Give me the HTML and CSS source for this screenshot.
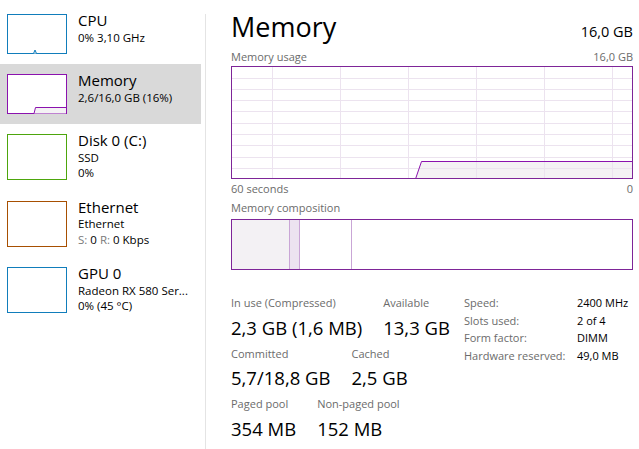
FILE: index.html
```html
<!DOCTYPE html>
<html lang="en">
<head>
<meta charset="utf-8">
<title>Task Manager - Memory</title>
<link rel="stylesheet" href="styles.css">
</head>
<body>
<div class="app">
  <nav class="sidebar">
    <div class="item">
      <svg class="thumb" width="60" height="40" viewBox="0 0 60 40">
        <rect x="0.5" y="0.5" width="59" height="39" fill="#fff" stroke="#117dbb"/>
        <path d="M26.5 39.5 L28 36 L29.5 39.5" fill="#dbeaf5" stroke="#117dbb"/>
      </svg>
      <div class="info">
        <div class="name">CPU</div>
        <div class="sub">0% 3,10 GHz</div>
      </div>
    </div>
    <div class="item selected">
      <svg class="thumb" width="60" height="40" viewBox="0 0 60 40">
        <rect x="0.5" y="0.5" width="59" height="39" fill="#fff" stroke="#8b12ae"/>
        <path d="M27 39.5 L28.5 33.5 L59 33.5 L59 39.5 Z" fill="#f4f2f4"/>
        <path d="M27 39.5 L28.5 33.5 L59 33.5" fill="none" stroke="#8b12ae"/>
      </svg>
      <div class="info">
        <div class="name">Memory</div>
        <div class="sub">2,6/16,0 GB (16%)</div>
      </div>
    </div>
    <div class="item tall">
      <svg class="thumb" width="60" height="46" viewBox="0 0 60 46">
        <rect x="0.5" y="0.5" width="59" height="45" fill="#fff" stroke="#4da60c"/>
      </svg>
      <div class="info">
        <div class="name">Disk 0 (C:)</div>
        <div class="sub">SSD</div>
        <div class="sub">0%</div>
      </div>
    </div>
    <div class="item tall">
      <svg class="thumb" width="60" height="46" viewBox="0 0 60 46">
        <rect x="0.5" y="0.5" width="59" height="45" fill="#fff" stroke="#a74f01"/>
      </svg>
      <div class="info">
        <div class="name">Ethernet</div>
        <div class="sub">Ethernet</div>
        <div class="sub"><span class="dim">S:</span> 0 <span class="dim">R:</span> 0 Kbps</div>
      </div>
    </div>
    <div class="item tall">
      <svg class="thumb" width="60" height="46" viewBox="0 0 60 46">
        <rect x="0.5" y="0.5" width="59" height="45" fill="#fff" stroke="#117dbb"/>
      </svg>
      <div class="info">
        <div class="name">GPU 0</div>
        <div class="sub">Radeon RX 580 Ser...</div>
        <div class="sub">0% (45 °C)</div>
      </div>
    </div>
  </nav>
  <div class="divider"></div>
  <main class="main">
    <header class="head">
      <h1 class="title">Memory</h1>
      <span class="total">16,0 GB</span>
    </header>
    <div class="caption usage"><span>Memory usage</span><span>16,0 GB</span></div>
    <svg class="chart" width="402" height="113" viewBox="0 0 402 113">
      <polygon points="184.5,113 190.5,95.5 402,95.5 402,113" fill="#f4f2f4"/>
      <path d="M0 12.5H402M0 23.5H402M0 34.5H402M0 45.5H402M0 57.5H402M0 68.5H402M0 79.5H402M0 91.5H402M0 102.5H402M41.5 0V113M109.5 0V113M177.5 0V113M245.5 0V113M313.5 0V113M381.5 0V113" stroke="#ece3ef" stroke-width="1" fill="none"/>
      <polyline points="184.5,113 190.5,95.5 402,95.5" fill="none" stroke="#8b12ae" stroke-width="1"/>
      <rect x="0.5" y="0.5" width="401" height="112" fill="none" stroke="#7e2598"/>
    </svg>
    <div class="caption axis"><span>60 seconds</span><span>0</span></div>
    <div class="caption comp-label">Memory composition</div>
    <svg class="comp" width="402" height="51" viewBox="0 0 402 51">
      <rect x="0" y="0" width="58" height="51" fill="#f3f1f4"/>
      <rect x="58" y="0" width="10" height="51" fill="#ece3f0"/>
      <path d="M58.5 0V51M68.5 0V51M120.5 0V51" stroke="#c9a6d6" fill="none"/>
      <rect x="0.5" y="0.5" width="401" height="50" fill="none" stroke="#7e2598"/>
    </svg>
    <section class="stats">
      <div class="stat-grid">
        <div class="stat-row">
          <div class="stat"><div class="label">In use (Compressed)</div><div class="value">2,3 GB (1,6 MB)</div></div>
          <div class="stat"><div class="label">Available</div><div class="value">13,3 GB</div></div>
        </div>
        <div class="stat-row">
          <div class="stat"><div class="label">Committed</div><div class="value">5,7/18,8 GB</div></div>
          <div class="stat"><div class="label">Cached</div><div class="value">2,5 GB</div></div>
        </div>
        <div class="stat-row">
          <div class="stat"><div class="label">Paged pool</div><div class="value">354 MB</div></div>
          <div class="stat"><div class="label">Non-paged pool</div><div class="value">152 MB</div></div>
        </div>
      </div>
      <dl class="specs">
        <dt>Speed:</dt><dd>2400 MHz</dd>
        <dt>Slots used:</dt><dd>2 of 4</dd>
        <dt>Form factor:</dt><dd>DIMM</dd>
        <dt>Hardware reserved:</dt><dd>49,0 MB</dd>
      </dl>
    </section>
  </main>
</div>
</body>
</html>
```

FILE: styles.css
```css
html, body {
  margin: 0;
  padding: 0;
}

body {
  width: 639px;
  height: 449px;
  overflow: hidden;
  background: #fff;
  color: #000;
  font-family: "Open Sans", "Noto Sans", sans-serif;
}

.app {
  display: flex;
  height: 449px;
}

/* Sidebar */
.sidebar {
  width: 201px;
  flex-shrink: 0;
  padding-top: 4px;
}

.item {
  display: flex;
  align-items: flex-start;
  gap: 11px;
  padding: 10px 0 10px 7px;
}

.item.selected {
  background: #d9d9d9;
}

.thumb {
  display: block;
  flex-shrink: 0;
}

.info {
  margin-top: -3px;
  white-space: nowrap;
}

.name {
  font-size: 15px;
  line-height: 18px;
}

.sub {
  font-size: 11.5px;
  line-height: 15.5px;
}

.name + .sub {
  margin-top: 0.5px;
}

.dim {
  color: #7a7a7a;
}

.divider {
  width: 1px;
  flex-shrink: 0;
  margin: 14px 0 0 4px;
  background: #e4e4e4;
}

/* Main panel */
.main {
  flex: 1;
  padding: 9px 7px 0 25px;
}

.head {
  display: flex;
  justify-content: space-between;
  align-items: baseline;
}

.title {
  margin: 0;
  font-size: 27px;
  font-weight: 400;
  line-height: 36px;
}

.total {
  font-size: 14.5px;
}

.caption {
  display: flex;
  justify-content: space-between;
  font-size: 11px;
  line-height: 15px;
  color: #6b6b6b;
}

.usage {
  margin-top: 4px;
}

.chart {
  display: block;
  margin-top: 2px;
}

.axis {
  margin-top: 2px;
}

.comp-label {
  margin-top: 4px;
}

.comp {
  display: block;
  margin-top: 4px;
}

/* Stats */
.stats {
  display: flex;
  align-items: flex-start;
  margin-top: 24px;
}

.stat-grid {
  width: 233px;
  flex-shrink: 0;
  padding-top: 1px;
}

.stat-row {
  display: flex;
  gap: 21px;
  margin-bottom: 6px;
  white-space: nowrap;
}

.label {
  font-size: 11px;
  line-height: 15px;
  color: #6b6b6b;
}

.value {
  margin-top: 4.5px;
  font-size: 18.5px;
  line-height: 25px;
}

.specs {
  display: grid;
  grid-template-columns: 113px auto;
  margin: 0;
  font-size: 11px;
  line-height: 17.5px;
  white-space: nowrap;
}

.specs dt {
  color: #6b6b6b;
}

.specs dd {
  margin: 0;
}
```
